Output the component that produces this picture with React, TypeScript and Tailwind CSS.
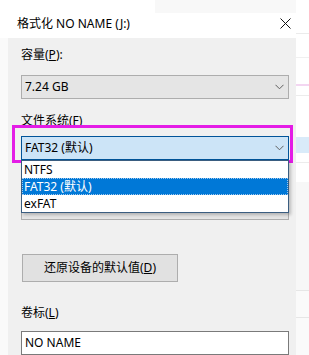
import React from 'react'

const font = { fontFamily: '"Noto Sans", "Noto Sans CJK SC", sans-serif' }

function Chevron() {
  return (
    <svg width="9" height="6" viewBox="0 0 9 6" className="shrink-0">
      <polyline points="0.5,0.8 4.5,4.8 8.5,0.8" fill="none" stroke="#5f5f5f" strokeWidth="1" />
    </svg>
  )
}

function Combo({ value, className }: { value: string; className: string }) {
  return (
    <div className={`h-[24px] flex items-center justify-between pl-[3px] pr-[4px] border ${className}`}>
      <span className="leading-[16px]">{value}</span>
      <Chevron />
    </div>
  )
}

export default function App() {
  return (
    <div className="w-[309px] h-[355px] overflow-hidden flex bg-white text-[12px] text-black" style={font}>
      {/* 对话框 */}
      <div className="w-[296px] flex flex-col">
        <div className="h-[14px] flex">
          <div className="w-[155px] bg-white" />
          <div className="flex-1 bg-[#f8f8f8]" />
        </div>
        <div className="h-[26px] bg-white flex items-start justify-between pl-[17px] pr-[5px] pt-[3px]">
          <span className="text-[12px] leading-[16px]">格式化 NO NAME (J:)</span>
          <svg width="11" height="11" viewBox="0 0 11 11" className="mt-[2px]">
            <path d="M0.5 0.5L10.5 10.5M10.5 0.5L0.5 10.5" stroke="#111" strokeWidth="1" />
          </svg>
        </div>
        <div className="flex-1 flex">
          <div className="w-[8px] bg-[#fafafa]" />
          <div className="flex-1 bg-[#f0f0f0] pl-[13px] pr-[7px] flex flex-col">
            <div className="mt-[9px] leading-[16px]">
              容量(<u>P</u>):
            </div>
            <Combo value="7.24 GB" className="mt-[12px] bg-[#e5e5e5] border-[#adadad]" />

            <div className="mt-[14px] leading-[16px]">
              文件系统(<u>F</u>)
            </div>
            <div className="relative mt-[7px]">
              <Combo value="FAT32 (默认)" className="bg-[#cce4f7] border-[#005499]" />
              {/* 标注框 */}
              <div className="absolute left-[-9px] right-[-4px] top-[-11px] bottom-[-3px] border-[3px] border-[#e41ce6] pointer-events-none" />
              {/* 下拉列表 */}
              <div className="absolute left-0 right-0 top-full z-10 bg-white border border-[#3a5d80] shadow-[2px_2px_3px_rgba(0,0,0,0.22)]">
                <div className="h-[17px] pl-[2px] flex items-center leading-[16px]">NTFS</div>
                <div className="h-[17px] pl-[2px] flex items-center leading-[16px] bg-[#0078d7] text-white outline-1 outline-dotted outline-offset-[-1px] outline-[#9fc8ee]">
                  FAT32 (默认)
                </div>
                <div className="h-[17px] pl-[2px] flex items-center leading-[16px]">exFAT</div>
              </div>
            </div>

            {/* 被下拉列表遮住的分配单元大小 */}
            <div className="mt-[8px] h-[16px]" />
            <div className="mt-[12px] h-[24px] bg-[#e5e5e5] border border-[#adadad]" />

            <button className="mt-[34px] ml-[1px] w-[156px] h-[28px] bg-[#e1e1e1] border border-[#adadad] leading-[16px]">
              还原设备的默认值(<u>D</u>)
            </button>

            <div className="mt-[23px] leading-[16px]">
              卷标(<u>L</u>)
            </div>
            <div className="mt-[10px] h-[24px] bg-white border border-[#7a7a7a] pl-[3px] flex items-center leading-[16px]">
              NO NAME
            </div>
          </div>
        </div>
      </div>

      {/* 背后窗口 */}
      <div className="flex-1 flex flex-col bg-white">
        <div className="h-[33px]" />
        <div className="h-px bg-[#ebebeb]" />
        <div className="h-[23px]" />
        <div className="h-px bg-[#f0f0f0]" />
        <div className="h-[26px]" />
        <div className="h-[2px] bg-[#f3d6f1]" />
        <div className="h-[9px]" />
        <div className="h-px bg-[#ececec]" />
        <div className="h-[41px]" />
        <div className="h-[16px] bg-[#d9ebf9]" />
        <div className="h-[9px]" />
        <div className="h-px bg-[#ececec]" />
        <div className="h-[19px]" />
        <div className="h-[108px] bg-[#f7f7f7]" />
        <div className="h-px bg-[#e6e6e6]" />
        <div className="h-[26px] bg-[#fafafa]" />
        <div className="h-px bg-[#e6e6e6]" />
        <div className="flex-1 bg-[#fafafa]" />
      </div>
    </div>
  )
}
